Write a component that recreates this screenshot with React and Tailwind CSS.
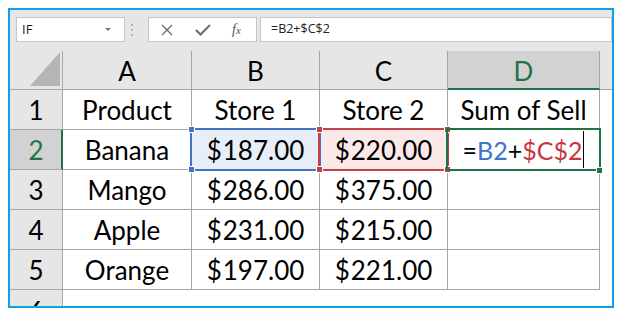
import React from 'react';

const rows = [
    ['Product', 'Store 1', 'Store 2', 'Sum of Sell'],
    ['Banana', '$187.00', '$220.00', ''],
    ['Mango', '$286.00', '$375.00', ''],
    ['Apple', '$231.00', '$215.00', ''],
    ['Orange', '$197.00', '$221.00', ''],
];

const colWidths = ['w-[129px]', 'w-[128px]', 'w-[128px]', 'w-[152px]'];

function Handle({ pos, color }) {
    return <div className={`absolute z-20 w-[7px] h-[7px] border border-white ${pos} ${color}`} />;
}

function Selection({ color, border, handles, width }) {
    return (
        <div className={`absolute -left-[2px] -top-[2px] h-[43px] ${width} z-10 pointer-events-none`}>
            <div className={`absolute inset-0 border-2 ${border}`} />
            {handles.map((h) => (
                <Handle key={h} pos={h} color={color} />
            ))}
        </div>
    );
}

function Money({ value }) {
    return (
        <span>
            <span className="mr-[1px]">$</span>
            {value.slice(1)}
        </span>
    );
}

function Toolbar() {
    return (
        <div className="h-[41px] flex items-start pt-[7px] pl-[6px] shrink-0">
            <div className="w-[109px] h-[25px] bg-white border border-[#c6c6c6] flex items-center justify-between pl-[5px] pr-[13px]">
                <span className="text-[13px] text-[#222]">IF</span>
                <span className="w-0 h-0 border-l-[3px] border-r-[3px] border-t-[3px] border-l-transparent border-r-transparent border-t-[#777]" />
            </div>
            <div className="w-[23px] h-[25px] flex flex-col items-start justify-center gap-[3px] pl-[6px]">
                <span className="w-[2px] h-[2px] bg-[#b4b4b4]" />
                <span className="w-[2px] h-[2px] bg-[#b4b4b4]" />
                <span className="w-[2px] h-[2px] bg-[#b4b4b4]" />
            </div>
            <div className="w-[109px] h-[25px] bg-white border border-[#c6c6c6] flex items-center">
                <svg width="12" height="12" viewBox="0 0 12 12" className="ml-[12px]">
                    <path d="M1 1 L11 11 M11 1 L1 11" stroke="#6b6b6b" strokeWidth="1.4" fill="none" />
                </svg>
                <svg width="16" height="12" viewBox="0 0 16 12" className="ml-[22px]">
                    <path d="M1 6 L5.5 10.5 L15 1" stroke="#6b6b6b" strokeWidth="2" fill="none" />
                </svg>
                <span className="ml-[21px] text-[#555] italic text-[14px] leading-none" style={{ fontFamily: '"Liberation Serif", serif' }}>
                    f<span className="text-[11px]">x</span>
                </span>
            </div>
            <div className="flex-1 ml-[3px] h-[25px] bg-white border border-[#c6c6c6] flex items-center pl-[10px]">
                <span className="text-[12.5px] text-[#222]">=B2+$C$2</span>
            </div>
        </div>
    );
}

export default function App() {
    return (
        <div className="w-[620px] h-[316px] bg-white p-2" style={{ fontFamily: '"Open Sans", sans-serif' }}>
            <div className="w-[606px] h-[300px] border-2 border-[#0aa3e5] bg-[#e6e6e6] flex flex-col overflow-hidden">
                <Toolbar />
                <div className="flex flex-col text-[26px] text-black" style={{ fontFamily: 'Lato, sans-serif' }}>
                    {/* column headers */}
                    <div className="flex h-[39px] shrink-0">
                        <div className="w-[53px] border-r border-b border-[#a6a6a6] relative">
                            <svg width="31" height="34" viewBox="0 0 31 34" className="absolute left-[20px] top-[1px]">
                                <polygon points="30,0 30,34 0,34" fill="#b5b5b5" />
                            </svg>
                        </div>
                        {['A', 'B', 'C'].map((c, i) => (
                            <div key={c} className={`${colWidths[i]} border-r border-b border-[#a6a6a6] flex items-center justify-center pt-[2px]`}>
                                {c}
                            </div>
                        ))}
                        <div className="w-[152px] bg-[#d2d2d2] border-r border-r-[#a6a6a6] border-b-2 border-b-[#217346] flex items-center justify-center pt-[3px] text-[#217346]">
                            D
                        </div>
                        <div className="flex-1 border-b border-[#a6a6a6]" />
                    </div>
                    {rows.map((r, ri) => {
                        const active = ri === 1;
                        return (
                            <div key={ri} className="flex h-[40px] shrink-0">
                                <div className={`w-[53px] border-b border-[#a6a6a6] flex items-center justify-center pt-[2px] ${active ? 'bg-[#d2d2d2] border-r-2 border-r-[#217346] text-[#217346] pl-[1px]' : 'border-r'}`}>
                                    {ri + 1}
                                </div>
                                {r.map((v, ci) => {
                                    let bg = 'bg-white';
                                    if (active && ci === 1) bg = 'bg-[#e8eef8]';
                                    if (active && ci === 2) bg = 'bg-[#fbe9e9]';
                                    return (
                                        <div key={ci} className={`${colWidths[ci]} ${bg} relative border-r border-b border-[#a6a6a6] flex items-center justify-center pt-[2px]`}>
                                            {v.startsWith('$') ? <Money value={v} /> : v}
                                            {active && ci === 1 && (
                                                <Selection
                                                    width="w-[131px]"
                                                    color="bg-[#4472c4]"
                                                    border="border-[#4472c4]"
                                                    handles={['-left-[2px] -top-[2px]', '-left-[2px] top-[38px]']}
                                                />
                                            )}
                                            {active && ci === 2 && (
                                                <Selection
                                                    width="w-[131px]"
                                                    color="bg-[#c4404a]"
                                                    border="border-[#c4404a]"
                                                    handles={[
                                                        '-left-[2px] -top-[2px]',
                                                        '-left-[2px] top-[38px]',
                                                        'left-[126px] -top-[2px]',
                                                        'left-[126px] top-[38px]',
                                                    ]}
                                                />
                                            )}
                                            {active && ci === 3 && (
                                                <>
                                                    <div className="flex items-center h-full text-[25px]">
                                                        <span>=</span>
                                                        <span className="text-[#3f74d0]">B2</span>
                                                        <span>+</span>
                                                        <span className="text-[#c9353f]">$C$2</span>
                                                        <div className="w-px h-[37px] bg-black ml-[1px] -mt-[2px]" />
                                                    </div>
                                                    <Selection
                                                        width="w-[155px]"
                                                        color="bg-[#217346]"
                                                        border="border-[#217346]"
                                                        handles={['left-[150px] top-[39px]']}
                                                    />
                                                </>
                                            )}
                                        </div>
                                    );
                                })}
                                <div className="flex-1 bg-white" />
                            </div>
                        );
                    })}
                    <div className="flex h-[40px] shrink-0">
                        <div className="w-[53px] border-r border-[#a6a6a6] flex items-center justify-center pt-[2px]">6</div>
                        <div className="flex-1 bg-white" />
                    </div>
                </div>
            </div>
        </div>
    );
}
